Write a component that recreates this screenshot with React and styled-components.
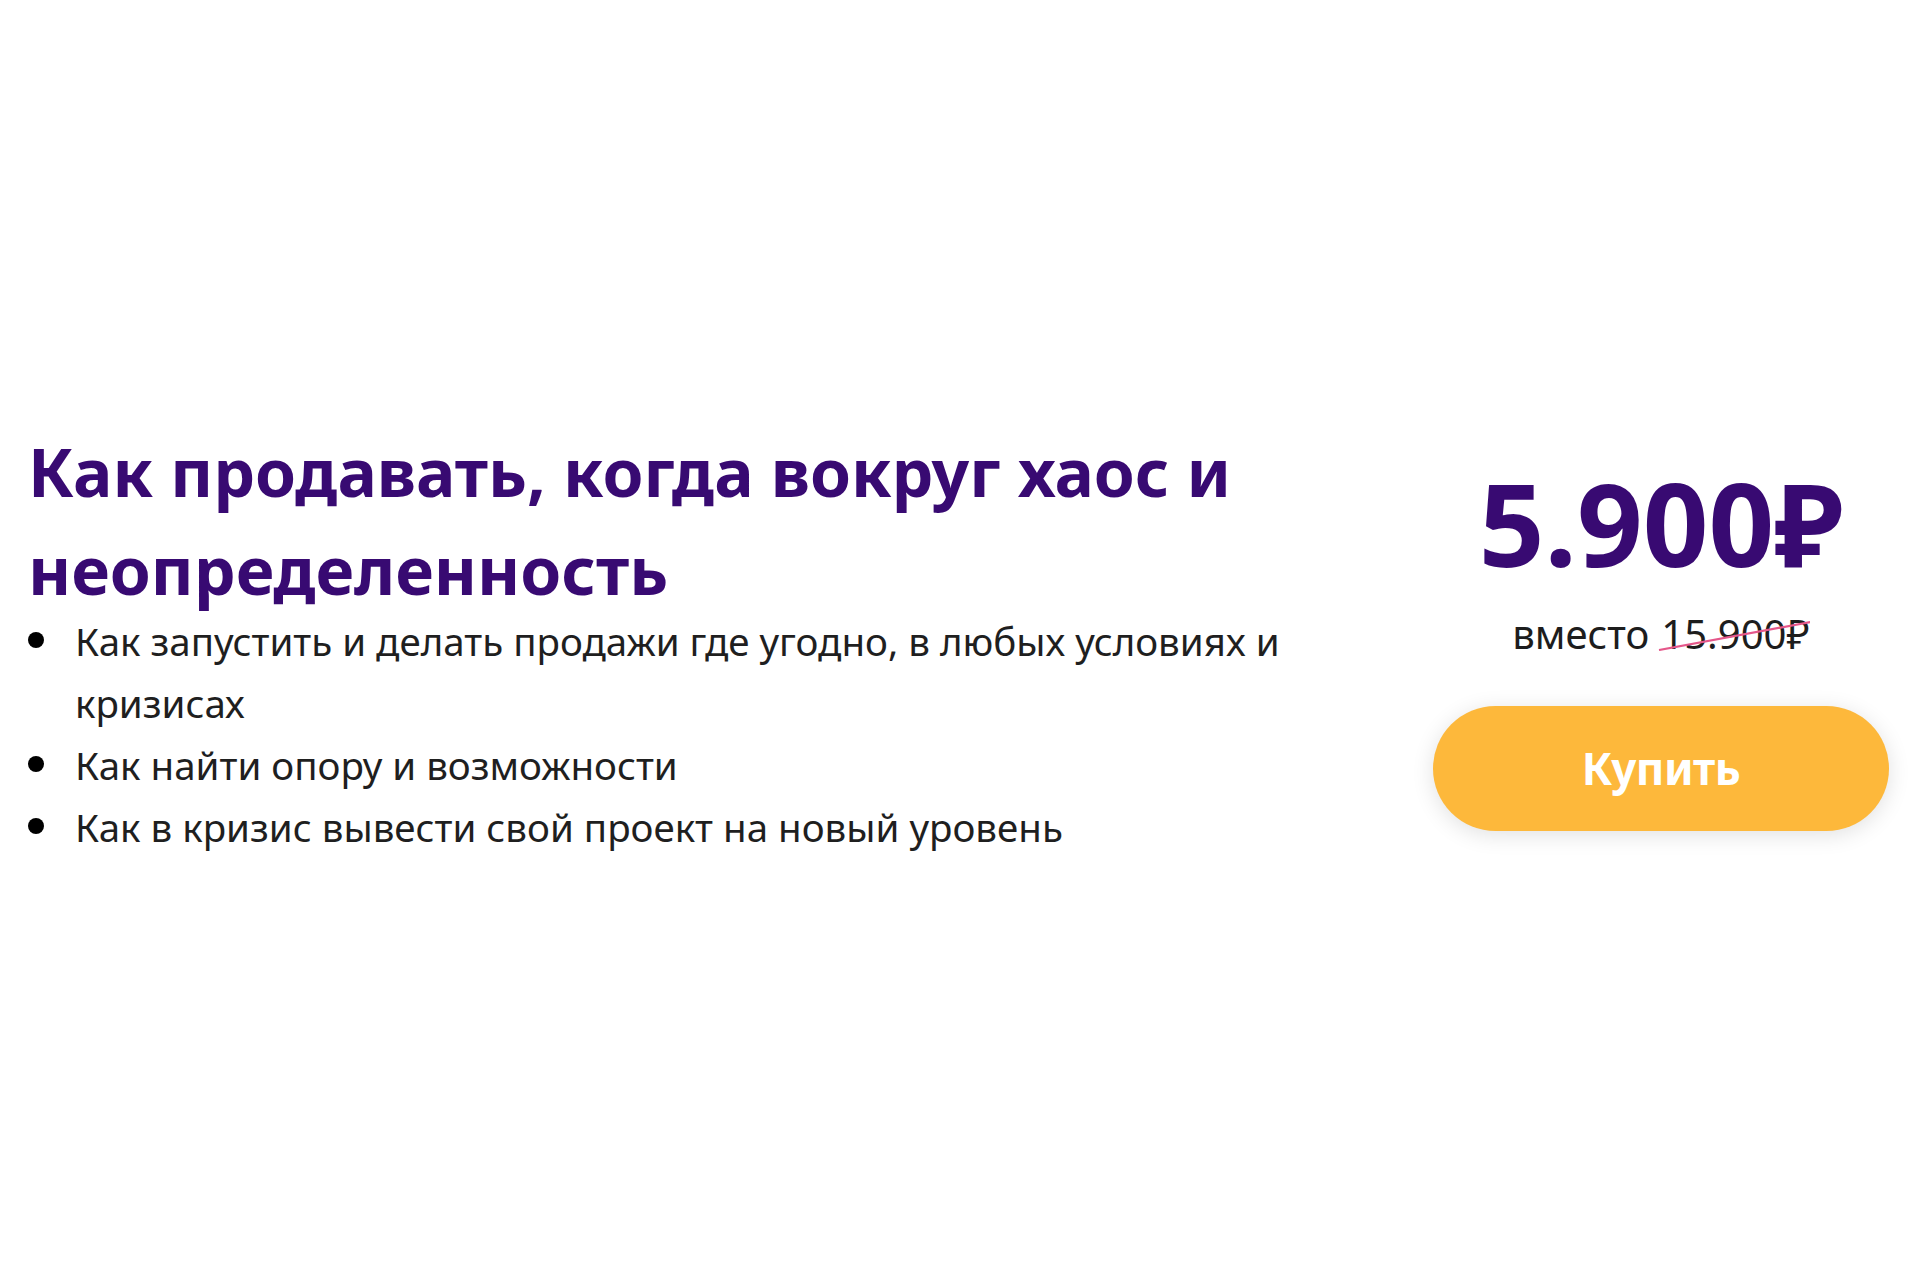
import React from 'react'
import styled, { createGlobalStyle } from 'styled-components'

const GlobalStyle = createGlobalStyle`
  html, body {
    margin: 0;
    padding: 0;
    background: #ffffff;
  }
  body {
    font-family: "Noto Sans", "Open Sans", sans-serif;
  }
`

const Page = styled.div`
  min-height: 100vh;
  box-sizing: border-box;
  display: flex;
  align-items: center;
  justify-content: space-between;
  padding: 0 31px 0 28px;
`

const Info = styled.div`
  flex: 0 0 1300px;
  display: flex;
  flex-direction: column;
`

const Title = styled.h1`
  margin: 0;
  font-size: 66px;
  line-height: 98px;
  font-weight: 700;
  color: #380a72;
`

const List = styled.ul`
  margin: -8px 0 0 0;
  padding: 0;
  list-style: none;
`

const Item = styled.li`
  position: relative;
  padding-left: 47px;
  font-size: 38.5px;
  line-height: 62px;
  color: #1f1f1f;

  &::before {
    content: '';
    position: absolute;
    left: 0;
    top: 22px;
    width: 16px;
    height: 16px;
    border-radius: 50%;
    background: #000;
  }
`

const Offer = styled.div`
  flex: 0 0 456px;
  display: flex;
  flex-direction: column;
  align-items: center;
  padding-top: 15px;
`

const Price = styled.div`
  font-size: 115px;
  line-height: 116px;
  font-weight: 700;
  color: #380a72;
`

const OldPrice = styled.div`
  margin-top: 25px;
  height: 45px;
  overflow: hidden;
  font-size: 40px;
  line-height: 56px;
  color: #1d1d1d;
  white-space: nowrap;
`

const Struck = styled.span`
  position: relative;
  display: inline-block;
  margin-left: 12px;

  svg {
    position: absolute;
    left: -2px;
    top: 0;
    width: calc(100% + 14px);
    height: 100%;
    overflow: visible;
  }
`

const BuyButton = styled.button`
  margin-top: 55px;
  width: 456px;
  height: 125px;
  border: 0;
  border-radius: 63px;
  background: #fdb83b;
  color: #ffffff;
  font-family: "Noto Sans", "Open Sans", sans-serif;
  font-size: 44px;
  font-weight: 700;
  letter-spacing: -0.5px;
  box-shadow: 0 4px 22px rgba(0, 0, 0, 0.12);
  cursor: pointer;
`

const bullets = [
  'Как запустить и делать продажи где угодно, в любых условиях и кризисах',
  'Как найти опору и возможности',
  'Как в кризис вывести свой проект на новый уровень',
]

export default function App() {
  return (
    <>
      <GlobalStyle />
      <Page>
        <Info>
          <Title>Как продавать, когда вокруг хаос и неопределенность</Title>
          <List>
            {bullets.map((text) => (
              <Item key={text}>{text}</Item>
            ))}
          </List>
        </Info>

        <Offer>
          <Price>5.900₽</Price>
          <OldPrice>
            вместо
            <Struck>
              15.900₽
              <svg viewBox="0 0 100 56" preserveAspectRatio="none">
                <line x1="0" y1="44" x2="100" y2="14" stroke="#e5578a" strokeWidth="2.2" vectorEffect="non-scaling-stroke" />
              </svg>
            </Struck>
          </OldPrice>
          <BuyButton>Купить</BuyButton>
        </Offer>
      </Page>
    </>
  )
}
